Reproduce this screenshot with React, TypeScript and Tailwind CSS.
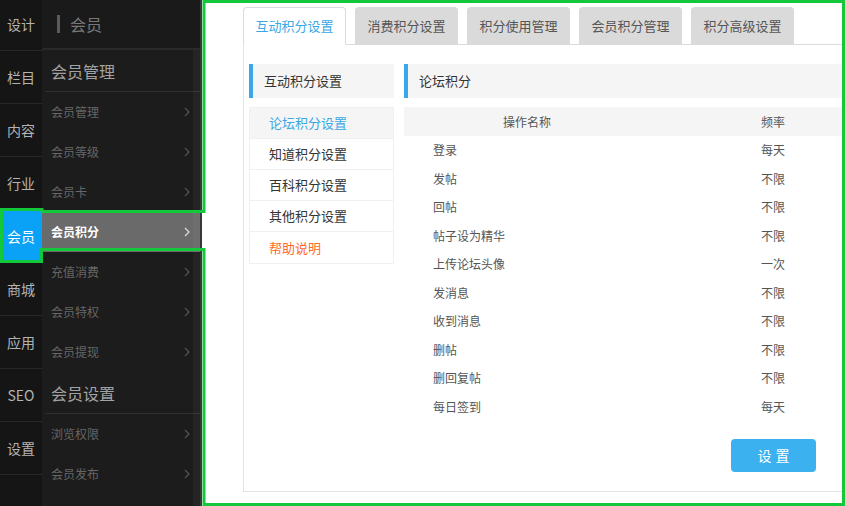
import React from 'react';

const mainNav = ['设计', '栏目', '内容', '行业', '会员', '商城', '应用', 'SEO', '设置'];

const subMenu: { type: 'head' | 'item'; label: string; active?: boolean }[] = [
  { type: 'head', label: '会员管理' },
  { type: 'item', label: '会员管理' },
  { type: 'item', label: '会员等级' },
  { type: 'item', label: '会员卡' },
  { type: 'item', label: '会员积分', active: true },
  { type: 'item', label: '充值消费' },
  { type: 'item', label: '会员特权' },
  { type: 'item', label: '会员提现' },
  { type: 'head', label: '会员设置' },
  { type: 'item', label: '浏览权限' },
  { type: 'item', label: '会员发布' },
];

const tabs = ['互动积分设置', '消费积分设置', '积分使用管理', '会员积分管理', '积分高级设置'];

const sideLinks = ['论坛积分设置', '知道积分设置', '百科积分设置', '其他积分设置', '帮助说明'];

const rules = [
  ['登录', '每天'],
  ['发帖', '不限'],
  ['回帖', '不限'],
  ['帖子设为精华', '不限'],
  ['上传论坛头像', '一次'],
  ['发消息', '不限'],
  ['收到消息', '不限'],
  ['删帖', '不限'],
  ['删回复帖', '不限'],
  ['每日签到', '每天'],
];

function Chevron({ color }: { color: string }) {
  return (
    <svg width="6" height="10" viewBox="0 0 6 10" fill="none">
      <polyline points="1,1 5,5 1,9" stroke={color} strokeWidth="1.2" />
    </svg>
  );
}

export default function App() {
  return (
    <div
      className="relative flex w-[845px] h-[506px] overflow-hidden bg-white"
      style={{ fontFamily: '"Noto Sans CJK SC", "Noto Sans", sans-serif' }}
    >
      {/* main icon column */}
      <div className="w-[42px] shrink-0 bg-[#151515] flex flex-col">
        <div className="-mt-[2px] flex flex-col">
          {mainNav.map((n) => (
            <div
              key={n}
              className={
                n === '会员'
                  ? 'h-[53px] flex items-center justify-center bg-[#0aa2f7] text-white text-[14px]'
                  : 'h-[53px] flex items-center justify-center border-b border-[#282828] text-[#b3b3b3] text-[14px]'
              }
            >
              {n}
            </div>
          ))}
        </div>
      </div>

      {/* sub menu */}
      <div className="relative w-[160px] shrink-0 bg-[#1c1c1c] border-r-2 border-[#383838] flex flex-col">
        <div className="h-[50px] flex items-center pl-[15px] bg-[#1a1a1a] border-b-2 border-[#2a2a2a]">
          <span className="w-[3px] h-[18px] bg-[#5a5a5a]" />
          <span className="ml-[10px] text-[16px] text-[#787878]">会员</span>
        </div>
        {subMenu.map((m, i) =>
          m.type === 'head' ? (
            <div
              key={i}
              className="ml-[3px] h-[42px] flex items-center pl-[6px] border-b border-[#303030] text-[16px] text-[#a3a3a3]"
            >
              {m.label}
            </div>
          ) : (
            <div
              key={i}
              className={
                m.active
                  ? 'h-[40px] flex items-center justify-between pl-[9px] pr-[10px] bg-[#6a6a6a] text-white text-[12px] font-bold'
                  : 'h-[40px] flex items-center justify-between pl-[9px] pr-[10px] text-[#666] text-[12px]'
              }
            >
              <span>{m.label}</span>
              <Chevron color={m.active ? '#dcdcdc' : '#555'} />
            </div>
          )
        )}
        <div className="absolute right-0 top-[50px] bottom-0 w-[7px] bg-white/[0.04]" />
      </div>

      {/* content */}
      <div className="flex-1 overflow-hidden pl-[41px] pt-[7px]">
        <div className="w-[700px]">
          <div className="flex gap-[9px] h-[38px] border-b border-[#dcdcdc]">
            {tabs.map((t, i) => (
              <div
                key={t}
                className={
                  i === 0
                    ? 'w-[103px] h-[38px] flex items-center justify-center rounded-t-[4px] border border-[#dcdcdc] border-b-white bg-white text-[13px] text-[#3aa8e6]'
                    : 'w-[103px] h-[37px] flex items-center justify-center rounded-t-[4px] bg-[#dadada] text-[13px] text-[#555]'
                }
              >
                {t}
              </div>
            ))}
          </div>

          <div className="h-[447px] border-l border-b border-[#e3e3e3] pl-[5px] pt-[19px] flex">
            {/* side links */}
            <div className="w-[145px] shrink-0">
              <div className="h-[34px] flex items-center bg-[#f5f5f5] border-l-4 border-[#3aa8e6] pl-[11px] text-[13px] text-[#333]">
                互动积分设置
              </div>
              <div className="mt-[9px] border border-[#f0f0f0]">
                {sideLinks.map((s, i) => (
                  <div
                    key={s}
                    className={
                      i === 0
                        ? 'h-[31px] flex items-center pl-[19px] bg-[#f5f5f5] text-[13px] text-[#3aa8e6] border-b border-[#f0f0f0]'
                        : i === 4
                        ? 'h-[31px] flex items-center pl-[19px] text-[13px] text-[#ff6a2b]'
                        : 'h-[31px] flex items-center pl-[19px] text-[13px] text-[#333] border-b border-[#f0f0f0]'
                    }
                  >
                    {s}
                  </div>
                ))}
              </div>
            </div>

            {/* rules */}
            <div className="ml-[10px] w-[492px] shrink-0">
              <div className="h-[34px] flex items-center bg-[#f5f5f5] border-l-4 border-[#3aa8e6] pl-[11px] text-[13px] text-[#333]">
                论坛积分
              </div>
              <div className="mt-[9px] h-[29px] flex items-center bg-[#f5f5f5] text-[12px] text-[#555]">
                <div className="w-[246px] text-center">操作名称</div>
                <div className="w-[246px] pl-[111px]">频率</div>
              </div>
              {rules.map(([name, freq]) => (
                <div key={name} className="h-[28.5px] flex items-center text-[12px] text-[#555]">
                  <div className="w-[246px] pl-[29px]">{name}</div>
                  <div className="w-[246px] pl-[111px]">{freq}</div>
                </div>
              ))}
              <button className="mt-[18px] ml-[327px] w-[85px] h-[33px] rounded-[4px] bg-[#3bb1f0] text-white text-[14px] tracking-[4px] pl-[4px]">
                设置
              </button>
            </div>
          </div>
        </div>
      </div>

      {/* highlight outline */}
      <svg className="absolute inset-0 pointer-events-none" width="845" height="506">
        <path
          d="M204,1.5 H843.5 V504.5 H204 V249.5 H41.5 V261.5 H1.5 V209.5 H42 V211.5 H204 Z"
          fill="none"
          stroke="#14c83c"
          strokeWidth="3"
        />
      </svg>
    </div>
  );
}
